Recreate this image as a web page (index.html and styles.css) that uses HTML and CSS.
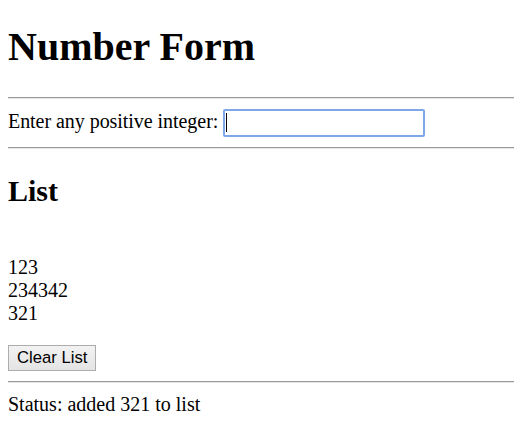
FILE: index.html
```html
<!DOCTYPE html>
<html>
<head>
<meta charset="utf-8">
<title>Number Form</title>
<link rel="stylesheet" href="styles.css">
</head>
<body>
<h1 class="title">Number Form</h1>
<hr class="rule">
<form class="entry">
  <label class="entry-label">Enter any positive integer: <span class="field"><input class="field-input" type="text"><span class="caret"></span></span></label>
</form>
<hr class="rule">
<h2 class="section-title">List</h2>
<div class="list">
  <div class="list-item">123</div>
  <div class="list-item">234342</div>
  <div class="list-item">321</div>
</div>
<div class="actions">
  <button class="btn" type="button">Clear List</button>
</div>
<hr class="rule">
<div class="status">Status: added 321 to list</div>
</body>
</html>
```

FILE: styles.css
```css
html {
  background: #ffffff;
}

body {
  margin: 8px 0 8px 8px;
  font-family: "Liberation Serif", "Times New Roman", serif;
  font-size: 20px;
  line-height: normal;
  color: #000000;
}

.title {
  font-size: 40px;
  font-weight: bold;
  margin: 15px 0 26.8px;
}

.rule {
  margin: 10px 0;
  border: none;
  border-top: 1px solid #9a9a9a;
  border-bottom: 1px solid #e6e6e6;
  height: 0;
}

.entry {
  margin: 0;
}

.entry-label {
  letter-spacing: -0.05px;
}

.field {
  position: relative;
  display: inline-block;
  letter-spacing: normal;
}

.field-input {
  box-sizing: border-box;
  width: 202px;
  height: 28px;
  padding: 1px 2px;
  border: 2px solid #7ea6e8;
  border-radius: 2px;
  font-family: "Liberation Sans", Arial, sans-serif;
  font-size: 16.67px;
  outline: none;
  background: #ffffff;
  vertical-align: baseline;
  caret-color: transparent;
}

.caret {
  position: absolute;
  left: 3px;
  top: 4px;
  width: 1px;
  height: 19px;
  background: #000000;
}

.section-title {
  font-size: 30px;
  font-weight: bold;
  margin: 24.9px 0 0;
}

.list {
  padding-top: 48px;
}

.actions {
  margin-top: 20px;
}

.btn {
  box-sizing: border-box;
  height: 26px;
  padding: 1px 8px;
  border: 1px solid #adadad;
  border-radius: 0;
  background: linear-gradient(#f2f2f2, #e4e4e4);
  font-family: "Liberation Sans", Arial, sans-serif;
  font-size: 16.67px;
  color: #000000;
}

.status {
  margin: 0;
}
```
